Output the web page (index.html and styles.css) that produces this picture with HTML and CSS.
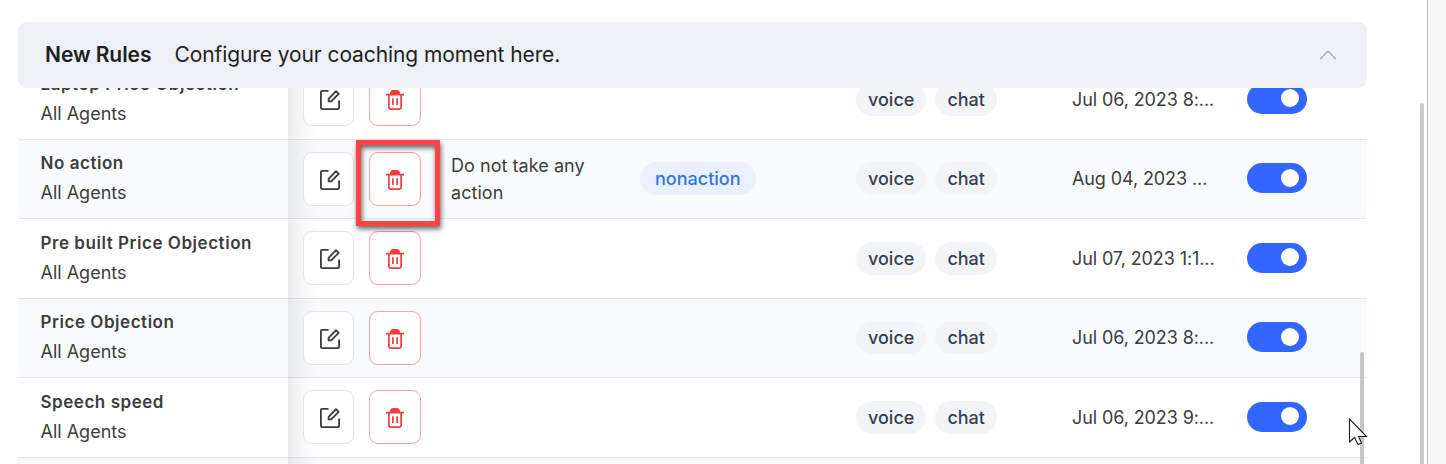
FILE: index.html
```html
<!DOCTYPE html>
<html lang="en">
<head>
<meta charset="utf-8">
<title>New Rules</title>
<link rel="stylesheet" href="styles.css">
</head>
<body>
<svg class="defs" width="0" height="0" aria-hidden="true">
  <symbol id="edit" viewBox="0 0 24 24">
    <path d="M11.500 3.900H5Q3.900 3.900 3.900 5V20.800Q3.900 22.100 5.200 22.100H20.800Q22.100 22.100 22.100 20.800V13.500" fill="none" stroke="#3b3b3b" stroke-width="1.8"/>
    <path d="M11.600 14.400V11.800L19 4.200L21.700 6.800L14.200 14.400Z" fill="none" stroke="#3b3b3b" stroke-width="1.800" stroke-linejoin="round"/>
  </symbol>
  <symbol id="trash" viewBox="0 0 24 24">
    <path d="M3 7.600H21M5.900 7.600V20.500Q5.900 22.100 7.500 22.100H16.500Q18.100 22.100 18.100 20.500V7.600M9.900 11.300V18M14.100 11.300V18" fill="none" stroke="#f03d3d" stroke-width="1.700"/>
    <path d="M7 7.500V6Q7.500 3 10.200 3H13.800Q16.500 3 17 6V7.500Z" fill="#f03d3d"/>
  </symbol>
</svg>
<div class="window">
  <main class="page">
    <section class="panel">
      <header class="panel-head">
        <h1>New Rules</h1>
        <p>Configure your coaching moment here.</p>
        <svg class="chevron" width="18" height="12" viewBox="0 0 18 12"><path d="M1.200 10L9 2L16.800 10" fill="none" stroke="#a3a3a3" stroke-width="1.200"/></svg>
      </header>
      <div class="rows">
        <div class="row">
          <div class="name"><strong>Laptop Price Objection</strong><span>All Agents</span></div>
          <div class="actions"><button class="btn"><svg><use href="#edit"/></svg></button><button class="btn danger"><svg><use href="#trash"/></svg></button></div>
          <div class="desc"></div>
          <div class="tags"></div>
          <div class="channels"><span class="pill">voice</span><span class="pill">chat</span></div>
          <div class="date">Jul 06, 2023 8:...</div>
          <div class="state"><i class="toggle"></i></div>
        </div>
        <div class="row alt">
          <div class="name"><strong>No action</strong><span>All Agents</span></div>
          <div class="actions"><button class="btn"><svg><use href="#edit"/></svg></button><button class="btn danger"><svg><use href="#trash"/></svg></button><div class="highlight"></div></div>
          <div class="desc">Do not take any action</div>
          <div class="tags"><span class="pill blue">nonaction</span></div>
          <div class="channels"><span class="pill">voice</span><span class="pill">chat</span></div>
          <div class="date">Aug 04, 2023 ...</div>
          <div class="state"><i class="toggle"></i></div>
        </div>
        <div class="row">
          <div class="name"><strong>Pre built Price Objection</strong><span>All Agents</span></div>
          <div class="actions"><button class="btn"><svg><use href="#edit"/></svg></button><button class="btn danger"><svg><use href="#trash"/></svg></button></div>
          <div class="desc"></div>
          <div class="tags"></div>
          <div class="channels"><span class="pill">voice</span><span class="pill">chat</span></div>
          <div class="date">Jul 07, 2023 1:1...</div>
          <div class="state"><i class="toggle"></i></div>
        </div>
        <div class="row alt">
          <div class="name"><strong>Price Objection</strong><span>All Agents</span></div>
          <div class="actions"><button class="btn"><svg><use href="#edit"/></svg></button><button class="btn danger"><svg><use href="#trash"/></svg></button></div>
          <div class="desc"></div>
          <div class="tags"></div>
          <div class="channels"><span class="pill">voice</span><span class="pill">chat</span></div>
          <div class="date">Jul 06, 2023 8:...</div>
          <div class="state"><i class="toggle"></i></div>
        </div>
        <div class="row">
          <div class="name"><strong>Speech speed</strong><span>All Agents</span></div>
          <div class="actions"><button class="btn"><svg><use href="#edit"/></svg></button><button class="btn danger"><svg><use href="#trash"/></svg></button></div>
          <div class="desc"></div>
          <div class="tags"></div>
          <div class="channels"><span class="pill">voice</span><span class="pill">chat</span></div>
          <div class="date">Jul 06, 2023 9:...</div>
          <div class="state"><i class="toggle"></i></div>
        </div>
        <div class="row alt last"><div class="name"></div><div class="actions"></div></div>
        <div class="table-scroll"></div>
      </div>
    </section>
    <div class="page-scroll"></div>
  </main>
  <aside class="gutter"></aside>
</div>
<svg class="cursor" width="20" height="28" viewBox="0 0 20 28"><path d="M1.500 1V24L6.500 19.500L10 26.500L13.500 25L10.500 18.500H18.500Z" fill="#fff" stroke="#1d1b26" stroke-width="1.100"/></svg>
</body>
</html>
```
FILE: styles.css
```css
* { box-sizing: border-box; }
body {
  margin: 0;
  height: 464px;
  overflow: hidden;
  position: relative;
  background: #fff;
  color: #3d3d3d;
  font-family: Inter, sans-serif;
  font-size: 18px;
}
.defs { position: absolute; }
.window { display: flex; height: 464px; }
.page { display: flex; flex: 1; padding-left: 18px; }
.panel { width: 1349px; padding-top: 22px; display: flex; flex-direction: column; }
.panel-head {
  position: relative;
  z-index: 3;
  flex: none;
  display: flex;
  align-items: center;
  height: 66px;
  padding: 0 30px 0 27px;
  background: #edf0f5;
  border-radius: 9px;
  color: #1f1f1f;
}
.panel-head h1 { margin: 0 23px 0 0; font-size: 21px; font-weight: 600; line-height: 28px; letter-spacing: -.06px; }
.panel-head p { margin: 0; font-size: 21px; line-height: 28px; letter-spacing: -.09px; }
.chevron { margin-left: auto; }
.rows { position: relative; flex: 1; min-height: 0; margin-top: -27.7px; }
.row {
  display: grid;
  grid-template-columns: 270px 163px 189px 216px 216px 175px 120px;
  height: 79.5px;
  border-bottom: 1px solid #e3e5e8;
  background: #fff;
}
.row.alt { background: #f9fafc; }
.row.last { height: 6.200px; border-bottom: 0; }
.name { display: flex; flex-direction: column; padding: 9.4px 0 0 22.500px; }
.last .name { padding-top: 0; }
.name strong { font-size: 17px; font-weight: 600; line-height: 28px; letter-spacing: .54px; white-space: nowrap; }
.name span { font-size: 18px; line-height: 28px; margin-top: 2px; }
.actions {
  position: relative;
  display: flex;
  gap: 15px;
  align-items: flex-start;
  padding: 12px 0 0 15px;
  margin-bottom: -1px;
  background: linear-gradient(90deg, rgba(0,0,0,.075), rgba(0,0,0,.035) 12px, rgba(0,0,0,0) 30px);
}
.last .actions { padding-top: 0; margin-bottom: 0; }
.btn {
  display: flex;
  align-items: center;
  justify-content: center;
  width: 51px;
  height: 54px;
  padding: 0 0 0 1px;
  background: #fff;
  border: 1px solid #e3e4e7;
  border-radius: 9px;
}
.btn.danger { width: 52px; padding: 0; border-color: #f9a0a0; }
.btn svg { width: 24px; height: 24px; }
.highlight {
  position: absolute;
  z-index: 2;
  left: 68px;
  top: 0;
  width: 84px;
  height: 86px;
  border: 5px solid #ff4246;
  box-shadow: 1px 3px 5px rgba(0,0,0,.6), inset 1px 3px 5px rgba(0,0,0,.6);
}
.desc { padding: 12px 40px 0 0; line-height: 27px; letter-spacing: .05px; }
.tags, .channels { display: flex; align-items: flex-start; gap: 9px; padding-top: 22.300px; }
.pill {
  height: 33px;
  padding: 0 12px;
  border-radius: 17px;
  background: #f2f4f8;
  color: #363f52;
  font-weight: 500;
  line-height: 33px;
}
.pill.blue { padding: 0 15px; background: #eaf0fd; color: #3374e8; }
.date { padding-top: 22.300px; line-height: 33px; letter-spacing: -.1px; white-space: nowrap; }
.state { padding-top: 23.500px; }
.toggle { display: flex; justify-content: flex-end; width: 60px; height: 30px; padding: 5.500px 8px; border-radius: 15px; background: #3366ff; }
.toggle::after { content: ""; width: 18px; height: 18px; border-radius: 50%; background: #fff; }
.table-scroll { position: absolute; right: 3px; top: 291.700px; width: 4px; height: 112px; border-radius: 2px 2px 0 0; background: #c5c6c7; }
.page-scroll { width: 4px; height: 361px; margin: 103px 0 0 53px; border-radius: 2px 2px 0 0; background: #cbcbcb; }
.gutter { width: 19px; border-left: 1px solid #b9b9b9; background: #f7f7f7; }
.cursor { position: absolute; left: 1348px; top: 418px; }
```
